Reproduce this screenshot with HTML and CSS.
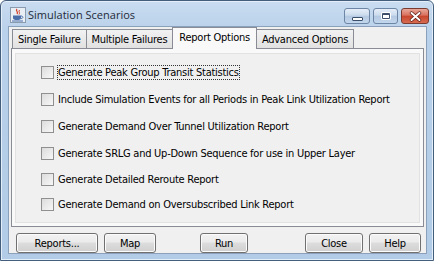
FILE: index.html
```html
<!DOCTYPE html>
<html>
<head>
<meta charset="utf-8">
<link rel="stylesheet" href="styles.css">
</head>
<body>
<div class="window">
  <div class="titlebar">
    <svg class="appicon" width="16" height="16" viewBox="0 0 16 16">
      <rect x="0.5" y="0.5" width="15" height="15" fill="#e9eef5" stroke="#8a9bb0"/>
      <path d="M7 2 C5 4 9 5 7 7" stroke="#d4402a" stroke-width="1.3" fill="none"/>
      <path d="M9.5 3 C8 5 10.5 5.5 9 7.5" stroke="#d4402a" stroke-width="1" fill="none"/>
      <path d="M3 8.5 H11 V11 C11 12.5 9.5 13 7 13 C4.5 13 3 12.5 3 11 Z" fill="#4a6fa8"/>
      <path d="M11 9 C13.5 9 13.5 11.5 11 11.5" stroke="#4a6fa8" stroke-width="1" fill="none"/>
      <rect x="2" y="13.5" width="11" height="1" fill="#4a6fa8"/>
    </svg>
    <span class="title">Simulation Scenarios</span>
    <div class="caption-buttons">
      <div class="cbtn min"><span class="glyph-min"></span></div>
      <div class="cbtn max"><span class="glyph-max"></span></div>
      <div class="cbtn close">
        <svg width="13" height="11" viewBox="0 0 13 11"><path d="M2.5 2 L10.5 9 M10.5 2 L2.5 9" stroke="#5a1d14" stroke-width="3.4" stroke-linecap="round"/><path d="M2.5 2 L10.5 9 M10.5 2 L2.5 9" stroke="#fff" stroke-width="2" stroke-linecap="round"/></svg>
      </div>
    </div>
  </div>
  <div class="client">
    <div class="tabs">
      <div class="tab">Single Failure</div>
      <div class="tab">Multiple Failures</div>
      <div class="tab active">Report Options</div>
      <div class="tab">Advanced Options</div>
    </div>
    <div class="panel">
      <div class="inner">
        <label class="row"><span class="box"></span><span class="text focus">Generate Peak Group Transit Statistics</span></label>
        <label class="row"><span class="box"></span><span class="text">Include Simulation Events for all Periods in Peak Link Utilization Report</span></label>
        <label class="row"><span class="box"></span><span class="text">Generate Demand Over Tunnel Utilization Report</span></label>
        <label class="row"><span class="box"></span><span class="text">Generate SRLG and Up-Down Sequence for use in Upper Layer</span></label>
        <label class="row tight"><span class="box"></span><span class="text">Generate Detailed Reroute Report</span></label>
        <label class="row tight"><span class="box"></span><span class="text">Generate Demand on Oversubscribed Link Report</span></label>
      </div>
    </div>
    <div class="buttons">
      <div class="btn w81">Reports...</div>
      <div class="btn w51 ml6">Map</div>
      <div class="btn w48 ml44">Run</div>
      <div class="btn w57 ml57">Close</div>
      <div class="btn w51 ml6">Help</div>
    </div>
  </div>
</div>
</body>
</html>
```

FILE: styles.css
```css
html, body {
  margin: 0;
  padding: 0;
  background: #ffffff;
}
.window {
  width: 434px;
  height: 261px;
  box-sizing: border-box;
  border: 1px solid #435d7c;
  border-radius: 6px 6px 0 0;
  background: linear-gradient(180deg, #c9dcf0 0px, #b9d1ea 30px, #b2cbe6 100%);
  padding: 0 6px 6px 7px;
  display: flex;
  flex-direction: column;
  box-shadow: inset 0 0 0 1px #e3eef9;
}
.titlebar {
  height: 25px;
  flex: none;
  display: flex;
  align-items: center;
  position: relative;
}
.appicon {
  margin-left: 2px;
  margin-top: 3px;
}
.title {
  font-family: "Open Sans", "Noto Sans", sans-serif;
  font-size: 11px;
  color: #1e2a38;
  margin-left: 2px;
  margin-top: 2px;
}
.caption-buttons {
  position: absolute;
  right: -2px;
  top: 7px;
  display: flex;
  gap: 3px;
}
.cbtn {
  height: 16px;
  box-sizing: border-box;
  border: 1px solid #6d86a5;
  border-radius: 3px;
  background: linear-gradient(180deg, #e6eef8 0%, #cbdbed 45%, #b4c9e2 50%, #c2d6ec 100%);
  display: flex;
  align-items: center;
  justify-content: center;
}
.cbtn.min { width: 26px; }
.cbtn.max { width: 25px; }
.cbtn.close {
  width: 28px;
  border-color: #7a3a30;
  background: linear-gradient(180deg, #e8a89a 0%, #d9705e 45%, #c8452d 50%, #d66a50 100%);
}
.glyph-min {
  width: 9px;
  height: 2px;
  background: #fff;
  border: 1px solid #3b4f6a;
  margin-top: 5px;
  border-radius: 1px;
}
.glyph-max {
  width: 6px;
  height: 3px;
  border: 1px solid #3b4f6a;
  border-top-width: 2px;
  background: #fff;
  box-shadow: 0 0 0 1px #fff;
  border-radius: 1px;
}
.client {
  flex: 1;
  background: #f0f0f0;
  border: 1px solid #8ba1bb;
  display: flex;
  flex-direction: column;
  font-family: "DejaVu Sans", sans-serif;
  font-stretch: condensed;
  font-size: 11px;
  letter-spacing: -0.25px;
  color: #000;
  padding: 0 2px 0 2px;
}
.tabs {
  display: flex;
  padding-left: 1px;
  margin-top: 0px;
  height: 21px;
  align-items: flex-end;
  position: relative;
  z-index: 1;
}
.tab {
  height: 19px;
  box-sizing: border-box;
  border: 1px solid #898c95;
  border-bottom: none;
  background: linear-gradient(180deg, #f2f2f2, #e1e1e1);
  padding: 3px 5px 0 5px;
  margin-right: -1px;
  white-space: nowrap;
}
.tab.active {
  height: 22px;
  background: #f9f9f9;
  padding-top: 3px;
  margin-bottom: -1px;
  padding-left: 6px;
  padding-right: 6px;
}
.panel {
  border: 1px solid #898c95;
  background: #f9f9f9;
  height: 179px;
  box-sizing: border-box;
  padding: 4px 3px 3px 3px;
  display: flex;
}
.inner {
  flex: 1;
  border: 1px solid #e2e2e2;
  background: #f0f0f0;
  padding-top: 5px;
  padding-left: 25px;
  display: flex;
  flex-direction: column;
}
.row {
  display: flex;
  align-items: center;
  height: 27px;
}
.row.tight {
  height: 25px;
}
.box {
  width: 11px;
  height: 11px;
  border: 1px solid #8f8f8f;
  background: linear-gradient(135deg, #dcdcdc, #f7f7f7);
  margin-right: 3px;
  flex: none;
}
.text {
  white-space: nowrap;
  padding: 0;
  border: 1px solid transparent;
}
.text.focus {
  border: 1px dotted #333;
}
.buttons {
  display: flex;
  margin-top: 6px;
  padding-left: 5px;
}
.btn {
  height: 20px;
  box-sizing: border-box;
  border: 1px solid #707070;
  border-radius: 3px;
  background: linear-gradient(180deg, #f2f2f2 0%, #ebebeb 45%, #dddddd 50%, #cfcfcf 100%);
  display: flex;
  align-items: center;
  justify-content: center;
  box-shadow: inset 0 0 0 1px #fbfbfb;
}
.w81 { width: 82px; }
.w51 { width: 52px; }
.w48 { width: 48px; }
.w57 { width: 58px; }
.ml6 { margin-left: 6px; }
.ml44 { margin-left: 44px; }
.ml57 { margin-left: 57px; }
```
